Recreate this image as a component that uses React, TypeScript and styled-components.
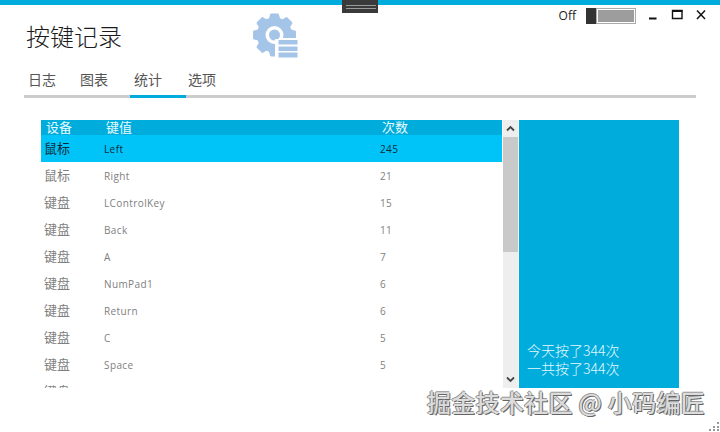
import React from "react";
import styled, { createGlobalStyle } from "styled-components";

const Global = createGlobalStyle`
  html, body { margin: 0; padding: 0; background: #fff; }
  body { font-family: "Open Sans", "Noto Sans CJK SC", sans-serif; }
  * { box-sizing: border-box; }
`;

const Page = styled.div`
  position: relative;
  width: 720px;
  height: 432px;
  overflow: hidden;
  background: #fff;
  display: flex;
  flex-direction: column;
`;
const TopStripe = styled.div`
  height: 5px;
  flex: none;
  background: #00acdc;
`;
const Notch = styled.div`
  position: absolute;
  left: 342px;
  top: 0;
  width: 36px;
  height: 13px;
  background: #3a3a3a;
  display: flex;
  flex-direction: column;
  justify-content: center;
  gap: 2px;
  &::before, &::after {
    content: "";
    display: block;
    height: 1px;
    margin: 0 2px 0 4px;
    background: #9a9a9a;
  }
`;
const Header = styled.header`
  height: 64px;
  flex: none;
  display: flex;
  padding-left: 26px;
  position: relative;
`;
const Title = styled.h1`
  margin: 15px 0 0;
  width: 227px;
  font: 300 24px/32px "Noto Sans CJK SC", sans-serif;
  color: #1c1c1c;
`;
const Logo = styled.svg`
  width: 46px;
  height: 46px;
  margin-top: 8px;
  flex: none;
`;
const Controls = styled.div`
  margin-left: auto;
  display: flex;
  align-items: flex-start;
  padding-top: 3px;
  padding-right: 12px;
`;
const OffLabel = styled.span`
  font-size: 12px;
  line-height: 16px;
  color: #222;
  margin-right: 10px;
`;
const Toggle = styled.div`
  width: 50px;
  height: 16px;
  display: flex;
`;
const Knob = styled.div`
  width: 10px;
  background: #333;
`;
const Track = styled.div`
  flex: 1;
  background: #9d9d9d;
  border: 1px solid #fff;
  outline: 1px solid #aaa;
  outline-offset: -1px;
  box-shadow: inset 0 0 0 1px #fff;
`;
const WinButtons = styled.div`
  display: flex;
  margin-left: 12px;
  gap: 9px;
`;
const WinIcon = styled.svg`
  width: 14px;
  height: 14px;
  display: block;
`;
const Tabs = styled.nav`
  flex: none;
  margin-left: 24px;
  width: 672px;
  height: 29px;
  display: flex;
  border-bottom: 3px solid #cccccc;
`;
const Tab = styled.div<{ $active?: boolean; $inset: number }>`
  width: ${p => (p.$active ? 56 : 53)}px;
  margin-bottom: -3px;
  height: 29px;
  font: 14px/20px "Noto Sans CJK SC", sans-serif;
  color: #555;
  padding-left: ${p => p.$inset}px;
  border-bottom: 3px solid ${p => (p.$active ? "#00acdc" : "transparent")};
`;
const Body = styled.main`
  flex: none;
  display: flex;
  margin: 22px 0 0 41px;
  height: 268px;
`;
const Table = styled.div`
  width: 461px;
  height: 268px;
  overflow: hidden;
  flex: none;
`;
const HeadRow = styled.div`
  height: 15px;
  background: #00acdc;
  display: grid;
  grid-template-columns: 60px 276px 1fr;
  color: #e6fbff;
  font: 13px/13px "Noto Sans CJK SC", sans-serif;
`;
const HeadCell = styled.span`
  padding-left: 5px;
`;
const Row = styled.div<{ $selected?: boolean }>`
  height: 27px;
  display: grid;
  grid-template-columns: 63px 276px 1fr;
  align-items: center;
  background: ${p => (p.$selected ? "#00c4f8" : "#fff")};
  color: ${p => (p.$selected ? "#0c2a38" : "#808080")};
`;
const Device = styled.span`
  font: 13px/16px "Noto Sans CJK SC", sans-serif;
  padding: 0 0 2px 3px;
`;
const Cell = styled.span`
  font-size: 10px;
  letter-spacing: 0.4px;
  line-height: 16px;
`;
const Scrollbar = styled.div`
  margin-left: 1px;
  width: 15px;
  height: 268px;
  flex: none;
  background: #eeeeee;
  display: flex;
  flex-direction: column;
`;
const ScrollButton = styled.div`
  height: 17px;
  flex: none;
  display: flex;
  align-items: center;
  justify-content: center;
`;
const Thumb = styled.div`
  height: 115px;
  flex: none;
  background: #c9c9c9;
`;
const Spacer = styled.div`
  flex: 1;
`;
const Side = styled.aside`
  margin-left: 1px;
  width: 160px;
  height: 268px;
  flex: none;
  background: #00acdc;
  color: #e4f8ff;
  display: flex;
  flex-direction: column;
  justify-content: flex-end;
  padding: 0 0 11px 8px;
  font: 300 14px/18px "Noto Sans CJK SC", sans-serif;
`;
const Watermark = styled.div`
  position: absolute;
  left: 427px;
  top: 387px;
  font: 500 24px/30px "Noto Sans CJK SC", sans-serif;
  letter-spacing: 0.3px;
  color: #dcdcdc;
  white-space: nowrap;
  text-shadow: 1px 1px 0 #666, -1px 0 0 #888, 0 -1px 0 #999;
`;
const Grip = styled.svg`
  position: absolute;
  right: 1px;
  bottom: 1px;
  width: 10px;
  height: 10px;
`;

const rows = [
  ["鼠标", "Left", "245"],
  ["鼠标", "Right", "21"],
  ["键盘", "LControlKey", "15"],
  ["键盘", "Back", "11"],
  ["键盘", "A", "7"],
  ["键盘", "NumPad1", "6"],
  ["键盘", "Return", "6"],
  ["键盘", "C", "5"],
  ["键盘", "Space", "5"],
  ["键盘", "D", "4"],
];

function gearPath(cx: number, cy: number, rOut: number, rIn: number, teeth: number) {
  const pts: string[] = [];
  const step = (Math.PI * 2) / teeth;
  for (let i = 0; i < teeth; i++) {
    const a = i * step - Math.PI / 2;
    const seq: [number, number][] = [
      [rIn, a - step * 0.34],
      [rOut, a - step * 0.2],
      [rOut, a + step * 0.2],
      [rIn, a + step * 0.34],
    ];
    seq.forEach(([r, t]) => pts.push(`${(cx + r * Math.cos(t)).toFixed(1)} ${(cy + r * Math.sin(t)).toFixed(1)}`));
  }
  return `M${pts.join("L")}Z`;
}

export default function App() {
  return (
    <Page>
      <Global />
      <TopStripe />
      <Notch />
      <Header>
        <Title>按键记录</Title>
        <Logo viewBox="0 0 46 46">
          <path d={gearPath(21.5, 22, 20.5, 16.5, 8)} fill="#a4c4e8" strokeLinejoin="round" stroke="#a4c4e8" strokeWidth="2.5" />
          <circle cx="21.5" cy="22" r="9" fill="#fff" />
          <circle cx="21.5" cy="22" r="5.5" fill="#a4c4e8" />
          <path d="M22 26v20h24V25H26v1z" fill="#fff" />
          <path d="M25.5 27h19v4.5h-19zM25.5 33.5h19v4.5h-19zM25.5 39.5h19v5h-19z" fill="#a4c4e8" />
        </Logo>
        <Controls>
          <OffLabel>Off</OffLabel>
          <Toggle>
            <Knob />
            <Track />
          </Toggle>
          <WinButtons>
            <WinIcon viewBox="0 0 14 14"><path d="M1 9.5h7.5v2H1z" fill="#111" /></WinIcon>
            <WinIcon viewBox="0 0 14 14"><path d="M1.5 2.5h9.5v8H1.5z" fill="none" stroke="#111" strokeWidth="1.4" /><path d="M1 2h10.5v2H1z" fill="#111" /></WinIcon>
            <WinIcon viewBox="0 0 14 14"><path d="M3 2.5l8 8.5M11 2.5L3 11" stroke="#111" strokeWidth="1.5" fill="none" /></WinIcon>
          </WinButtons>
        </Controls>
      </Header>
      <Tabs>
        <Tab $inset={4}>日志</Tab>
        <Tab $inset={3}>图表</Tab>
        <Tab $inset={4} $active>统计</Tab>
        <Tab $inset={2}>选项</Tab>
      </Tabs>
      <Body>
        <Table>
          <HeadRow>
            <HeadCell>设备</HeadCell>
            <HeadCell>键值</HeadCell>
            <HeadCell>次数</HeadCell>
          </HeadRow>
          {rows.map((r, i) => (
            <Row key={i} $selected={i === 0}>
              <Device>{r[0]}</Device>
              <Cell>{r[1]}</Cell>
              <Cell>{r[2]}</Cell>
            </Row>
          ))}
        </Table>
        <Scrollbar>
          <ScrollButton>
            <svg width="9" height="7" viewBox="0 0 9 7"><path d="M1 5.5l3.5-3.5 3.5 3.5" fill="none" stroke="#444" strokeWidth="1.8" /></svg>
          </ScrollButton>
          <Thumb />
          <Spacer />
          <ScrollButton>
            <svg width="9" height="7" viewBox="0 0 9 7"><path d="M1 1.5l3.5 3.5 3.5-3.5" fill="none" stroke="#444" strokeWidth="1.8" /></svg>
          </ScrollButton>
        </Scrollbar>
        <Side>
          <div>今天按了344次</div>
          <div>一共按了344次</div>
        </Side>
      </Body>
      <Watermark>掘金技术社区 @ 小码编匠</Watermark>
      <Grip viewBox="0 0 10 10">
        <path d="M8 1h2v2H8zM4 5h2v2H4zM8 5h2v2H8zM0 8h2v2H0zM4 8h2v2H4zM8 8h2v2H8z" fill="#999" />
      </Grip>
    </Page>
  );
}
